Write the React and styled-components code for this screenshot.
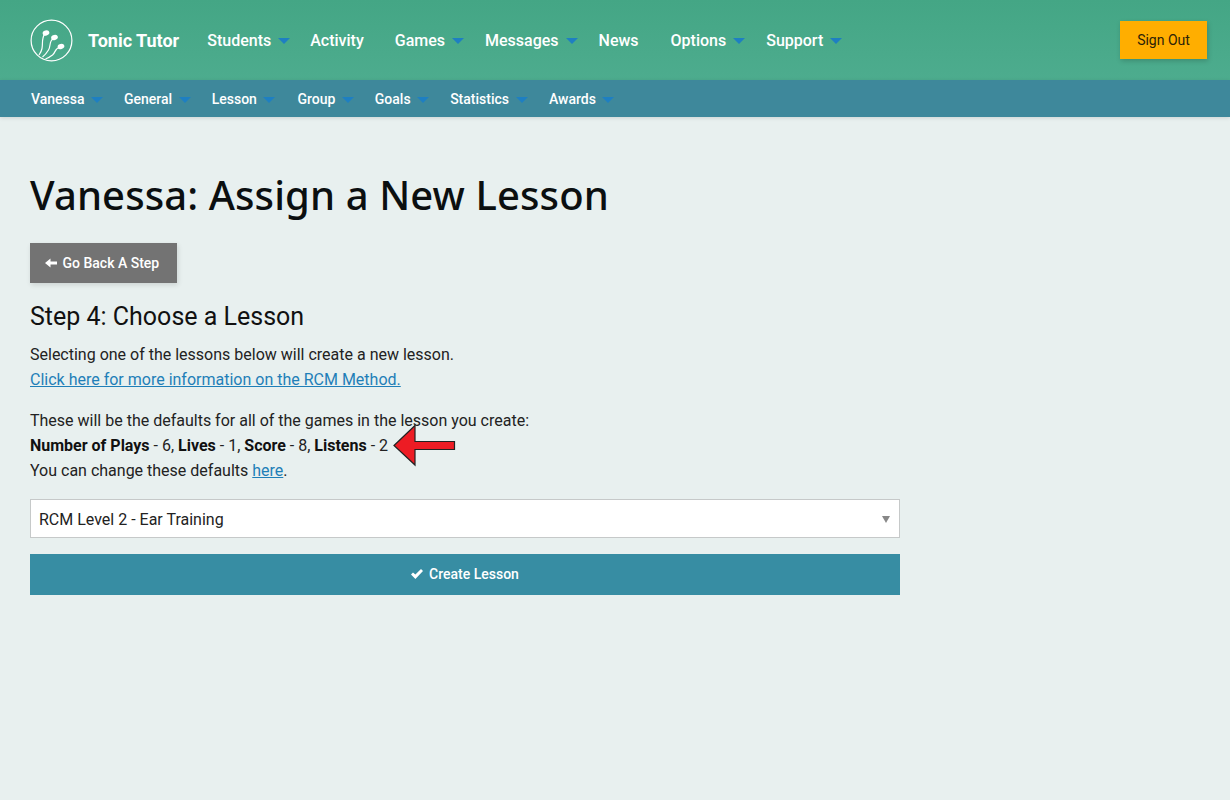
import React from "react";
import styled, { createGlobalStyle } from "styled-components";

const Global = createGlobalStyle`
  html, body { margin: 0; padding: 0; background: #e8f0ef; }
  body { font-family: Roboto, "Liberation Sans", sans-serif; color: #1c1c1c; height: 800px; overflow: hidden; }
  * { box-sizing: border-box; }
`;

const TopBar = styled.header`
  height: 80px;
  background: linear-gradient(180deg, #44a685 0%, #4dac8e 100%);
  display: flex;
  align-items: center;
  padding: 0 23px 0 30px;
`;
const Brand = styled.div`
  display: flex;
  align-items: center;
  gap: 15px;
  margin-right: 28px;
`;
const BrandName = styled.span`
  color: #fff;
  font-size: 18px;
  font-weight: 700;
`;
const MainMenu = styled.nav`
  display: flex;
  flex: 1;
  align-items: center;
`;
const MenuItem = styled.a`
  display: flex;
  align-items: center;
  color: #fff;
  font-size: ${p => p.$size}px;
  font-weight: 500;
  margin-right: ${p => p.$after || 0}px;
`;
const Caret = styled.span`
  width: 0;
  height: 0;
  margin-left: ${p => p.$gap}px;
  margin-right: ${p => p.$after}px;
  margin-top: 2px;
  border-style: solid;
  border-width: 6px 6px 0 6px;
  border-color: #1e7fc2 transparent transparent transparent;
`;
const SignOut = styled.button`
  width: 87px;
  height: 38px;
  border: 0;
  background: #ffae00;
  color: #2b2208;
  font: 400 14px Roboto, sans-serif;
  box-shadow: 1px 2px 5px rgba(0,0,0,.18);
`;
const SubBar = styled.nav`
  height: 37px;
  background: #3e889b;
  display: flex;
  align-items: center;
  padding: 0 0 0 31px;
  box-shadow: 0 1px 4px rgba(0,0,0,.12);
  position: relative;
`;
const Page = styled.main`
  position: relative;
  padding: 0 30px;
  width: 930px;
`;
const Title = styled.h1`
  margin: 0;
  padding-top: 51px;
  font: 500 40px/54px "Noto Sans", sans-serif;
  letter-spacing: 0.11px;
  color: #0b0f10;
`;
const BackButton = styled.button`
  display: flex;
  align-items: center;
  gap: 5.5px;
  margin-top: 21px;
  width: 147px;
  height: 40px;
  padding: 0 0 0 15px;
  border: 0;
  background: #737373;
  color: #fff;
  font: 500 14px Roboto, sans-serif;
  box-shadow: 1px 2px 5px rgba(0,0,0,.12);
`;
const StepTitle = styled.h2`
  margin: 18px 0 0;
  font: 400 25px/31px Roboto, sans-serif;
  color: #111;
`;
const Para = styled.p`
  margin: ${p => p.$top}px 0 0;
  font-size: 16px;
  line-height: 25px;
  color: #222;
`;
const TextLink = styled.a`
  color: #1f7fb8;
  text-decoration: underline;
`;
const Strong = styled.b`
  font-weight: 700;
  color: #111;
`;
const SelectBox = styled.div`
  margin-top: 16px;
  height: 39px;
  background: #fff;
  border: 1px solid #c6c9c9;
  display: flex;
  align-items: center;
  justify-content: space-between;
  padding: 1px 9px 0 8px;
  font-size: 16px;
  color: #222;
`;
const SelectCaret = styled.span`
  width: 0;
  height: 0;
  border-style: solid;
  border-width: 7px 4px 0 4px;
  border-color: #888 transparent transparent transparent;
`;
const CreateButton = styled.button`
  margin-top: 16px;
  width: 100%;
  height: 41px;
  padding: 0 0 2px;
  border: 0;
  background: #378da3;
  color: #fff;
  font: 500 14px Roboto, sans-serif;
  display: flex;
  align-items: center;
  justify-content: center;
  gap: 6px;
`;
const ArrowMark = styled.svg`
  position: absolute;
  left: 393px;
  top: 307px;
`;

const Logo = () => (
  <svg width="43" height="43" viewBox="0 0 43 43" fill="none" stroke="#fff" strokeWidth="1.2">
    <circle cx="21.5" cy="21.5" r="20.4" />
    <path d="M14.5 15.5C11.5 19 13 25 12 29.5 11.5 32 10.5 34 9 36" />
    <path d="M23 20C19 22 21 27 18.5 31 17 33.5 15 36 12.5 38" />
    <path d="M29.5 28.5C25 29 26 33 22.5 36 20.5 37.5 18 39 15.5 40" />
    <g fill="#fff" stroke="none">
      <ellipse cx="16" cy="14" rx="3.4" ry="2.6" transform="rotate(-15 16 14)" />
      <ellipse cx="24.5" cy="18.5" rx="3.4" ry="2.6" transform="rotate(-15 24.5 18.5)" />
      <ellipse cx="31" cy="27.5" rx="3.4" ry="2.6" transform="rotate(-15 31 27.5)" />
    </g>
  </svg>
);

const ArrowLeft = () => (
  <svg width="12" height="10" viewBox="0 0 12 10"><path d="M0 5 5.5 .6v2.8H12v3.2H5.5v2.8z" fill="#fff" /></svg>
);
const Check = () => (
  <svg width="12" height="10" viewBox="0 0 12 10"><path d="M0 5.6 2 3.4 4.4 5.6 10 0l2 2-7.6 8z" fill="#fff" /></svg>
);

const main = [
  ["Students", true, 20], ["Activity", false, 31], ["Games", true, 21], ["Messages", true, 21],
  ["News", false, 32], ["Options", true, 21], ["Support", true, 0],
];
const sub = [
  ["Vanessa", 21], ["General", 21], ["Lesson", 22], ["Group", 21], ["Goals", 21], ["Statistics", 21.5], ["Awards", 0],
];

export default function App() {
  return (
    <>
      <Global />
      <TopBar>
        <Brand>
          <Logo />
          <BrandName>Tonic Tutor</BrandName>
        </Brand>
        <MainMenu>
          {main.map(([t, c, a]) => (
            <MenuItem key={t} $size={16} $after={c ? 0 : a}>
              {t}{c && <Caret $gap={7} $after={a} />}
            </MenuItem>
          ))}
        </MainMenu>
        <SignOut>Sign Out</SignOut>
      </TopBar>
      <SubBar>
        {sub.map(([t, a]) => (
          <MenuItem key={t} $size={14}>
            {t}<Caret $gap={6.5} $after={a} />
          </MenuItem>
        ))}
      </SubBar>
      <Page>
        <Title>Vanessa: Assign a New Lesson</Title>
        <BackButton><ArrowLeft />Go Back A Step</BackButton>
        <StepTitle>Step 4: Choose a Lesson</StepTitle>
        <Para $top={10}>
          Selecting one of the lessons below will create a new lesson.<br />
          <TextLink>Click here for more information on the RCM Method.</TextLink>
        </Para>
        <Para $top={16}>
          These will be the defaults for all of the games in the lesson you create:<br />
          <Strong>Number of Plays</Strong> - 6, <Strong>Lives</Strong> - 1, <Strong>Score</Strong> - 8, <Strong>Listens</Strong> - 2<br />
          You can change these defaults <TextLink>here</TextLink>.
        </Para>
        <SelectBox>RCM Level 2 - Ear Training<SelectCaret /></SelectBox>
        <CreateButton><Check />Create Lesson</CreateButton>
        <ArrowMark width="64" height="44" viewBox="0 0 64 44">
          <path d="M1 21.5 22 1.5V17.5H61.5V25.5H22V41Z" fill="#ed1c24" stroke="#222" strokeWidth="1.2" />
        </ArrowMark>
      </Page>
    </>
  );
}
